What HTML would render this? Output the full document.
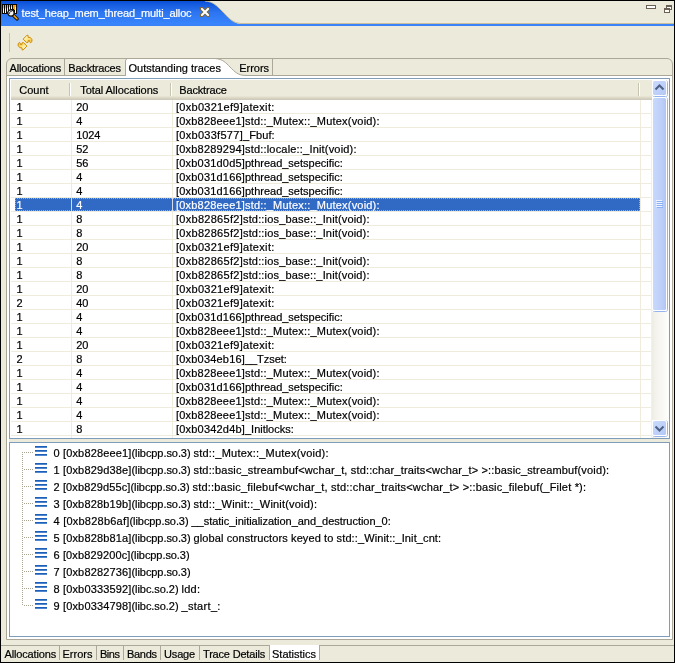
<!DOCTYPE html>
<html lang="en"><head><meta charset="utf-8"><title>test_heap_mem_thread_multi_alloc</title>
<style>
*{margin:0;padding:0;box-sizing:border-box}
html,body{width:675px;height:663px;overflow:hidden}
body{position:relative;background:#ECEADB;-webkit-text-stroke:0.2px;font-family:"Liberation Sans",sans-serif;font-size:11px;color:#000;line-height:14px}
#root{position:absolute;left:0;top:0;width:675px;height:663px;will-change:transform}
.a{position:absolute}
.t{position:absolute;white-space:pre;line-height:14px;height:14px}
.w{color:#fff}
#frame{left:0;top:0;width:675px;height:663px;border:1px solid #000;z-index:50;pointer-events:none}
#titlebar{left:1px;top:1px}
#titleline{left:1px;top:24px;width:673px;height:2px;background:#3A82F7}
#titleline2{left:240px;top:23px;width:434px;height:1px;background:#C9BE9C}
.hdr{top:80px;height:20px;background:linear-gradient(#EBEADB 0,#EBEADB 16px,#E6E3D3 16px,#E6E3D3 17px,#DEDACA 17px,#DEDACA 18px,#D5D1C1 18px,#D5D1C1 19px,#CFCBBC 19px,#CFCBBC 20px)}
.hsepd{top:83px;width:1px;height:13px;background:#C7C5B2}
.hsepw{top:83px;width:1px;height:13px;background:#fff}
.vline{top:100px;width:1px;height:338px;background:#EFECDE}
.hline{left:11px;width:641px;height:1px;background:#EFECDE}
.sel{left:15px;top:198px;width:625px;height:13px;background:#316AC5}
.vsep{width:1px;background:#ACA899}
.dh{left:22px;width:11px;height:1px;background:repeating-linear-gradient(90deg,#A8A490 0,#A8A490 1px,transparent 1px,transparent 2px)}
</style></head>
<body><div id="root">
<svg class="a" id="titlebar" width="260" height="25" viewBox="0 0 260 25">
<defs><linearGradient id="tg" x1="0" y1="0" x2="0" y2="1"><stop offset="0" stop-color="#0A50D8"/><stop offset="0.45" stop-color="#2C74F0"/><stop offset="1" stop-color="#3B88FF"/></linearGradient></defs>
<path d="M0 0 H204 C212 0.5 216 5 221 10 C227 16 231 22 240 23 L240 25 L0 25 Z" fill="url(#tg)"/>
<path d="M204 0 C212 0.5 216 5 221 10 C227 16 231 22 240 22.5" fill="none" stroke="#C9BE9C" stroke-width="1"/>
</svg>
<div class="a" id="titleline2"></div><div class="a" id="titleline"></div>
<svg class="a" style="left:1px;top:1px" width="22" height="22" viewBox="0 0 22 22">
<defs><linearGradient id="ob" x1="0" y1="0" x2="0" y2="1"><stop offset="0" stop-color="#F59A10"/><stop offset="0.3" stop-color="#F8B040"/><stop offset="0.55" stop-color="#fff"/><stop offset="1" stop-color="#fff"/></linearGradient></defs>
<rect x="1" y="3" width="15" height="10" fill="#0c0803"/>
<g fill="url(#ob)"><rect x="2" y="4" width="1" height="8"/><rect x="4" y="4" width="1" height="8"/><rect x="6" y="4" width="1" height="7"/><rect x="8" y="4" width="1" height="5"/><rect x="10" y="4" width="1" height="4"/></g>
<g fill="#F59A10"><rect x="12" y="4" width="1" height="4"/><rect x="13" y="4" width="1" height="5"/></g>
<rect x="14" y="5" width="1" height="7" fill="#fff"/><rect x="14" y="4" width="1" height="2" fill="#F8B040"/>
<line x1="12.5" y1="14.5" x2="16.2" y2="18" stroke="#1a1208" stroke-width="3.2" stroke-linecap="round"/>
<line x1="12.8" y1="14.6" x2="16" y2="17.7" stroke="#F5A520" stroke-width="1.5" stroke-linecap="round"/>
<circle cx="10" cy="12" r="3.1" fill="#F4F4F4" stroke="#1c1c1c" stroke-width="1.2"/>
<path d="M8.6 12.9 A1.9 1.9 0 0 1 10.9 10.4" fill="none" stroke="#444" stroke-width="1"/>
</svg>
<div class="t w" style="left:21.5px;top:6px;letter-spacing:-0.134px">test_heap_mem_thread_multi_alloc</div>
<svg class="a" style="left:200px;top:7px" width="10" height="10" viewBox="0 0 9 9">
<path d="M0.5 0.5 H2.5 L4.5 2.5 L6.5 0.5 H8.5 V2.5 L6.5 4.5 L8.5 6.5 V8.5 H6.5 L4.5 6.5 L2.5 8.5 H0.5 V6.5 L2.5 4.5 L0.5 2.5 Z" fill="#fff" stroke="#7B6A45" stroke-width="1"/>
</svg>
<svg class="a" style="left:645px;top:3px" width="28" height="12" viewBox="0 0 28 12">
<rect x="1.5" y="2.5" width="9" height="3" fill="#fff" stroke="#6B6053" stroke-width="1"/>
<rect x="21.5" y="2.5" width="5" height="4" fill="#fff" stroke="#6B6053" stroke-width="1"/>
<rect x="21" y="2" width="6" height="2" fill="#6B6053"/>
<rect x="19.5" y="5.5" width="5" height="4" fill="#fff" stroke="#6B6053" stroke-width="1"/>
<rect x="19" y="5" width="6" height="2" fill="#6B6053"/>
</svg>
<div class="a" style="left:9px;top:33px;width:1px;height:19px;background:#C5C2B0"></div>
<svg class="a" style="left:14px;top:32px" width="22" height="22" viewBox="0 0 22 22">
<defs><linearGradient id="ag" x1="0" y1="0" x2="1" y2="1"><stop offset="0.15" stop-color="#FFFCE0"/><stop offset="0.55" stop-color="#FFE478"/><stop offset="1" stop-color="#F2B530"/></linearGradient></defs>
<path d="M13 3.2 L14 3.3 L14.1 5.3 L16.3 5.5 L17.9 7.5 L17.9 9.6 L16.6 10.8 L15.6 9.6 L15.6 8.6 L14.3 8.5 L14.1 10.3 L12.6 10.6 L9.2 7.1 Z" fill="url(#ag)" stroke="#C98A0A" stroke-width="1" stroke-linejoin="round"/>
<path d="M13 3.2 L14 3.3 L14.1 5.3 L16.3 5.5 L17.9 7.5 L17.9 9.6 L16.6 10.8 L15.6 9.6 L15.6 8.6 L14.3 8.5 L14.1 10.3 L12.6 10.6 L9.2 7.1 Z" fill="url(#ag)" stroke="#C98A0A" stroke-width="1" stroke-linejoin="round" transform="rotate(180 11.05 10.6)"/>
</svg>
<div class="a" style="left:6px;top:58px;width:667px;height:582px;border:1px solid #ACA899;border-radius:6px 6px 0 0;background:#ECEADB"></div>
<div class="a" style="left:7px;top:76px;width:665px;height:563px;background:#fff"></div>
<div class="a" style="left:7px;top:75px;width:665px;height:1px;background:#ACA899"></div>
<svg class="a" style="left:125px;top:59px" width="124" height="17" viewBox="0 0 124 17">
<path d="M0.5 17 L0.5 2 Q0.5 0 2.5 0 H90 C98 0 101 4 105 8 C110 13 113 16.5 120 16.5 L120 17 Z" fill="#fff"/>
<path d="M0.5 17 L0.5 2 Q0.5 0 2.5 -0.5" stroke="#ACA899" stroke-width="1" fill="none"/>
<path d="M90 -0.5 C98 0 101 4 105 8 C110 13 113 16.5 121 16.5" stroke="#ACA899" stroke-width="1" fill="none"/>
</svg>
<div class="a vsep" style="left:64px;top:59px;height:16px"></div>
<div class="a vsep" style="left:272px;top:59px;height:16px"></div>
<div class="t" style="left:9.5px;top:61px;letter-spacing:-0.155px">Allocations</div>
<div class="t" style="left:68.3px;top:61px;letter-spacing:-0.192px">Backtraces</div>
<div class="t" style="left:128.5px;top:61px;letter-spacing:0.009px">Outstanding traces</div>
<div class="t" style="left:239.3px;top:61px;letter-spacing:-0.042px">Errors</div>
<div class="a" style="left:9px;top:78px;width:661px;height:361px;border:1px solid #7F9DB9;background:#fff"></div>
<div class="a hdr" style="left:11px;width:641px"></div>
<div class="a hsepd" style="left:69px"></div><div class="a hsepw" style="left:70px"></div>
<div class="a hsepd" style="left:170px"></div><div class="a hsepw" style="left:171px"></div>
<div class="a hsepd" style="left:638px"></div><div class="a hsepw" style="left:639px"></div>
<div class="t" style="left:19.3px;top:83px;letter-spacing:-0.012px">Count</div>
<div class="t" style="left:80.2px;top:83px;letter-spacing:-0.052px">Total Allocations</div>
<div class="t" style="left:179.3px;top:83px;letter-spacing:-0.158px">Backtrace</div>
<div class="a hline" style="top:113px"></div>
<div class="a hline" style="top:127px"></div>
<div class="a hline" style="top:141px"></div>
<div class="a hline" style="top:155px"></div>
<div class="a hline" style="top:169px"></div>
<div class="a hline" style="top:183px"></div>
<div class="a hline" style="top:197px"></div>
<div class="a hline" style="top:211px"></div>
<div class="a hline" style="top:225px"></div>
<div class="a hline" style="top:239px"></div>
<div class="a hline" style="top:253px"></div>
<div class="a hline" style="top:267px"></div>
<div class="a hline" style="top:281px"></div>
<div class="a hline" style="top:295px"></div>
<div class="a hline" style="top:309px"></div>
<div class="a hline" style="top:323px"></div>
<div class="a hline" style="top:337px"></div>
<div class="a hline" style="top:351px"></div>
<div class="a hline" style="top:365px"></div>
<div class="a hline" style="top:379px"></div>
<div class="a hline" style="top:393px"></div>
<div class="a hline" style="top:407px"></div>
<div class="a hline" style="top:421px"></div>
<div class="a hline" style="top:435px"></div>
<div class="a vline" style="left:71px"></div>
<div class="a vline" style="left:172px"></div>
<div class="a vline" style="left:640px"></div>
<div class="a" style="left:651px;top:100px;width:1px;height:338px;background:#F3F1E6"></div>
<div class="a sel"></div>
<div class="a" style="left:15px;top:198px;width:625px;height:1px;background:repeating-linear-gradient(90deg,#F0A030 0,#F0A030 1px,transparent 1px,transparent 2px)"></div>
<div class="a" style="left:15px;top:210px;width:625px;height:1px;background:repeating-linear-gradient(90deg,#F0A030 0,#F0A030 1px,transparent 1px,transparent 2px)"></div>
<div class="a" style="left:15px;top:198px;width:1px;height:13px;background:repeating-linear-gradient(180deg,#F0A030 0,#F0A030 1px,transparent 1px,transparent 2px)"></div>
<div class="a" style="left:639px;top:198px;width:1px;height:13px;background:repeating-linear-gradient(180deg,#F0A030 0,#F0A030 1px,transparent 1px,transparent 2px)"></div>
<div class="a" style="left:71px;top:198px;width:1px;height:13px;background:#D8DCE8"></div>
<div class="a" style="left:172px;top:198px;width:1px;height:13px;background:#D8DCE8"></div>
<div class="t" style="left:16.5px;top:100px">1</div><div class="t" style="left:76.3px;top:100px;letter-spacing:-0.125px">20</div><div class="t" style="left:176px;top:100px"><span style="letter-spacing:0.281px">[0xb0321ef9]</span><span style="letter-spacing:0.334px">atexit:</span></div>
<div class="t" style="left:16.5px;top:114px">1</div><div class="t" style="left:76.3px;top:114px;letter-spacing:-0.125px">4</div><div class="t" style="left:176px;top:114px"><span style="letter-spacing:0.194px">[0xb828eee1]</span><span style="letter-spacing:0.196px">std::_Mutex::_Mutex(void):</span></div>
<div class="t" style="left:16.5px;top:128px">1</div><div class="t" style="left:76.3px;top:128px;letter-spacing:-0.121px">1024</div><div class="t" style="left:176px;top:128px"><span style="letter-spacing:0.281px">[0xb033f577]</span><span style="letter-spacing:0.085px">_Fbuf:</span></div>
<div class="t" style="left:16.5px;top:142px">1</div><div class="t" style="left:76.3px;top:142px;letter-spacing:-0.125px">52</div><div class="t" style="left:176px;top:142px"><span style="letter-spacing:0.194px">[0xb8289294]</span><span style="letter-spacing:0.188px">std::locale::_Init(void):</span></div>
<div class="t" style="left:16.5px;top:156px">1</div><div class="t" style="left:76.3px;top:156px;letter-spacing:-0.125px">56</div><div class="t" style="left:176px;top:156px"><span style="letter-spacing:0.194px">[0xb031d0d5]</span><span style="letter-spacing:-0.007px">pthread_setspecific:</span></div>
<div class="t" style="left:16.5px;top:170px">1</div><div class="t" style="left:76.3px;top:170px;letter-spacing:-0.125px">4</div><div class="t" style="left:176px;top:170px"><span style="letter-spacing:0.194px">[0xb031d166]</span><span style="letter-spacing:-0.007px">pthread_setspecific:</span></div>
<div class="t" style="left:16.5px;top:184px">1</div><div class="t" style="left:76.3px;top:184px;letter-spacing:-0.125px">4</div><div class="t" style="left:176px;top:184px"><span style="letter-spacing:0.194px">[0xb031d166]</span><span style="letter-spacing:-0.007px">pthread_setspecific:</span></div>
<div class="t w" style="left:16.5px;top:198px">1</div><div class="t w" style="left:76.3px;top:198px;letter-spacing:-0.125px">4</div><div class="t w" style="left:176px;top:198px"><span style="letter-spacing:0.194px">[0xb828eee1]</span><span style="letter-spacing:0.196px">std::_Mutex::_Mutex(void):</span></div>
<div class="t" style="left:16.5px;top:212px">1</div><div class="t" style="left:76.3px;top:212px;letter-spacing:-0.125px">8</div><div class="t" style="left:176px;top:212px"><span style="letter-spacing:0.281px">[0xb82865f2]</span><span style="letter-spacing:0.163px">std::ios_base::_Init(void):</span></div>
<div class="t" style="left:16.5px;top:226px">1</div><div class="t" style="left:76.3px;top:226px;letter-spacing:-0.125px">8</div><div class="t" style="left:176px;top:226px"><span style="letter-spacing:0.281px">[0xb82865f2]</span><span style="letter-spacing:0.163px">std::ios_base::_Init(void):</span></div>
<div class="t" style="left:16.5px;top:240px">1</div><div class="t" style="left:76.3px;top:240px;letter-spacing:-0.125px">20</div><div class="t" style="left:176px;top:240px"><span style="letter-spacing:0.281px">[0xb0321ef9]</span><span style="letter-spacing:0.334px">atexit:</span></div>
<div class="t" style="left:16.5px;top:254px">1</div><div class="t" style="left:76.3px;top:254px;letter-spacing:-0.125px">8</div><div class="t" style="left:176px;top:254px"><span style="letter-spacing:0.281px">[0xb82865f2]</span><span style="letter-spacing:0.163px">std::ios_base::_Init(void):</span></div>
<div class="t" style="left:16.5px;top:268px">1</div><div class="t" style="left:76.3px;top:268px;letter-spacing:-0.125px">8</div><div class="t" style="left:176px;top:268px"><span style="letter-spacing:0.281px">[0xb82865f2]</span><span style="letter-spacing:0.163px">std::ios_base::_Init(void):</span></div>
<div class="t" style="left:16.5px;top:282px">1</div><div class="t" style="left:76.3px;top:282px;letter-spacing:-0.125px">20</div><div class="t" style="left:176px;top:282px"><span style="letter-spacing:0.281px">[0xb0321ef9]</span><span style="letter-spacing:0.334px">atexit:</span></div>
<div class="t" style="left:16.5px;top:296px">2</div><div class="t" style="left:76.3px;top:296px;letter-spacing:-0.125px">40</div><div class="t" style="left:176px;top:296px"><span style="letter-spacing:0.281px">[0xb0321ef9]</span><span style="letter-spacing:0.334px">atexit:</span></div>
<div class="t" style="left:16.5px;top:310px">1</div><div class="t" style="left:76.3px;top:310px;letter-spacing:-0.125px">4</div><div class="t" style="left:176px;top:310px"><span style="letter-spacing:0.194px">[0xb031d166]</span><span style="letter-spacing:-0.007px">pthread_setspecific:</span></div>
<div class="t" style="left:16.5px;top:324px">1</div><div class="t" style="left:76.3px;top:324px;letter-spacing:-0.125px">4</div><div class="t" style="left:176px;top:324px"><span style="letter-spacing:0.194px">[0xb828eee1]</span><span style="letter-spacing:0.196px">std::_Mutex::_Mutex(void):</span></div>
<div class="t" style="left:16.5px;top:338px">1</div><div class="t" style="left:76.3px;top:338px;letter-spacing:-0.125px">20</div><div class="t" style="left:176px;top:338px"><span style="letter-spacing:0.281px">[0xb0321ef9]</span><span style="letter-spacing:0.334px">atexit:</span></div>
<div class="t" style="left:16.5px;top:352px">2</div><div class="t" style="left:76.3px;top:352px;letter-spacing:-0.125px">8</div><div class="t" style="left:176px;top:352px"><span style="letter-spacing:0.194px">[0xb034eb16]</span><span style="letter-spacing:-0.061px">__Tzset:</span></div>
<div class="t" style="left:16.5px;top:366px">1</div><div class="t" style="left:76.3px;top:366px;letter-spacing:-0.125px">4</div><div class="t" style="left:176px;top:366px"><span style="letter-spacing:0.194px">[0xb828eee1]</span><span style="letter-spacing:0.196px">std::_Mutex::_Mutex(void):</span></div>
<div class="t" style="left:16.5px;top:380px">1</div><div class="t" style="left:76.3px;top:380px;letter-spacing:-0.125px">4</div><div class="t" style="left:176px;top:380px"><span style="letter-spacing:0.194px">[0xb031d166]</span><span style="letter-spacing:-0.007px">pthread_setspecific:</span></div>
<div class="t" style="left:16.5px;top:394px">1</div><div class="t" style="left:76.3px;top:394px;letter-spacing:-0.125px">4</div><div class="t" style="left:176px;top:394px"><span style="letter-spacing:0.194px">[0xb828eee1]</span><span style="letter-spacing:0.196px">std::_Mutex::_Mutex(void):</span></div>
<div class="t" style="left:16.5px;top:408px">1</div><div class="t" style="left:76.3px;top:408px;letter-spacing:-0.125px">4</div><div class="t" style="left:176px;top:408px"><span style="letter-spacing:0.194px">[0xb828eee1]</span><span style="letter-spacing:0.196px">std::_Mutex::_Mutex(void):</span></div>
<div class="t" style="left:16.5px;top:422px">1</div><div class="t" style="left:76.3px;top:422px;letter-spacing:-0.125px">8</div><div class="t" style="left:176px;top:422px"><span style="letter-spacing:0.194px">[0xb0342d4b]</span><span style="letter-spacing:-0.02px">_Initlocks:</span></div>
<div class="a" style="left:652px;top:80px;width:17px;height:358px;background:linear-gradient(90deg,#EEEDE5 0,#F6F5EF 6px,#FEFEFB 100%)"></div>
<svg class="a" style="left:652px;top:80px" width="17" height="17" viewBox="0 0 17 17">
<rect x="0" y="0" width="17" height="17" fill="#fff"/>
<rect x="0.5" y="0.5" width="15" height="16" rx="2" fill="#fff" stroke="#98B4EC" stroke-width="1"/>
<rect x="0" y="0" width="15" height="16" rx="1.5" fill="#fff"/>
<defs><linearGradient id="sb80" x1="0" y1="0" x2="1" y2="1"><stop offset="0" stop-color="#CBDAFD"/><stop offset="1" stop-color="#B4C8F6"/></linearGradient></defs>
<rect x="1" y="1" width="13" height="14" rx="1.5" fill="url(#sb80)"/>
<path d="M3.5 9.5 L7.5 5.5 L11.5 9.5" fill="none" stroke="#4D6185" stroke-width="2" stroke-linejoin="miter"/>
</svg>
<svg class="a" style="left:652px;top:420px" width="17" height="17" viewBox="0 0 17 17">
<rect x="0" y="0" width="17" height="17" fill="#fff"/>
<rect x="0.5" y="0.5" width="15" height="16" rx="2" fill="#fff" stroke="#98B4EC" stroke-width="1"/>
<rect x="0" y="0" width="15" height="16" rx="1.5" fill="#fff"/>
<defs><linearGradient id="sb420" x1="0" y1="0" x2="1" y2="1"><stop offset="0" stop-color="#CBDAFD"/><stop offset="1" stop-color="#B4C8F6"/></linearGradient></defs>
<rect x="1" y="1" width="13" height="14" rx="1.5" fill="url(#sb420)"/>
<path d="M3.5 6.5 L7.5 10.5 L11.5 6.5" fill="none" stroke="#4D6185" stroke-width="2" stroke-linejoin="miter"/>
</svg>
<svg class="a" style="left:652px;top:97px" width="17" height="215" viewBox="0 0 17 215">
<rect x="0" y="0" width="17" height="215" fill="#fff"/>
<rect x="0.5" y="0.5" width="15" height="214" rx="2" fill="#fff" stroke="#98B4EC" stroke-width="1"/>
<rect x="0" y="0" width="15" height="214" rx="1.5" fill="#fff"/>
<defs><linearGradient id="th" x1="0" y1="0" x2="1" y2="0"><stop offset="0" stop-color="#C9D8FC"/><stop offset="0.7" stop-color="#BCCEF8"/><stop offset="1" stop-color="#B0C4F4"/></linearGradient></defs>
<rect x="1" y="1" width="13" height="212" rx="1.5" fill="url(#th)"/>
<g fill="#EEF4FE"><rect x="4" y="103" width="6" height="1"/><rect x="4" y="105" width="6" height="1"/><rect x="4" y="107" width="6" height="1"/><rect x="4" y="109" width="6" height="1"/></g>
<g fill="#8CB0F8"><rect x="5" y="104" width="6" height="1"/><rect x="5" y="106" width="6" height="1"/><rect x="5" y="108" width="6" height="1"/><rect x="5" y="110" width="6" height="1"/></g>
</svg>
<div class="a" style="left:9px;top:439px;width:661px;height:3px;background:#ECEADB"></div>
<div class="a" style="left:9px;top:442px;width:661px;height:195px;border:1px solid #7F9DB9;background:#fff"></div>
<div class="a" style="left:22px;top:452px;width:1px;height:154px;background:repeating-linear-gradient(180deg,#A8A490 0,#A8A490 1px,transparent 1px,transparent 2px)"></div>
<div class="a dh" style="top:452px"></div>
<svg class="a" style="left:35px;top:446px" width="12" height="10" viewBox="0 0 12 10"><g fill="#1C5FB8"><rect x="0" y="0" width="12" height="1"/><rect x="0" y="4" width="12" height="1"/><rect x="0" y="8" width="12" height="1"/></g><g fill="#4F86CE"><rect x="0" y="1" width="12" height="1"/><rect x="0" y="5" width="12" height="1"/><rect x="0" y="9" width="12" height="1"/></g></svg>
<div class="t" style="left:53.5px;top:446px"><span style="letter-spacing:0.153px">0 [0xb828eee1]</span><span style="letter-spacing:-0.07px">(libcpp.so.3) </span><span style="letter-spacing:0.215px">std::_Mutex::_Mutex(void):</span></div>
<div class="a dh" style="top:469px;left:24px;width:9px"></div>
<svg class="a" style="left:35px;top:463px" width="12" height="10" viewBox="0 0 12 10"><g fill="#1C5FB8"><rect x="0" y="0" width="12" height="1"/><rect x="0" y="4" width="12" height="1"/><rect x="0" y="8" width="12" height="1"/></g><g fill="#4F86CE"><rect x="0" y="1" width="12" height="1"/><rect x="0" y="5" width="12" height="1"/><rect x="0" y="9" width="12" height="1"/></g></svg>
<div class="t" style="left:53.5px;top:463px"><span style="letter-spacing:0.153px">1 [0xb829d38e]</span><span style="letter-spacing:-0.07px">(libcpp.so.3) </span><span style="letter-spacing:0.158px">std::basic_streambuf&lt;wchar_t, std::char_traits&lt;wchar_t&gt; &gt;::basic_streambuf(void):</span></div>
<div class="a dh" style="top:486px"></div>
<svg class="a" style="left:35px;top:480px" width="12" height="10" viewBox="0 0 12 10"><g fill="#1C5FB8"><rect x="0" y="0" width="12" height="1"/><rect x="0" y="4" width="12" height="1"/><rect x="0" y="8" width="12" height="1"/></g><g fill="#4F86CE"><rect x="0" y="1" width="12" height="1"/><rect x="0" y="5" width="12" height="1"/><rect x="0" y="9" width="12" height="1"/></g></svg>
<div class="t" style="left:53.5px;top:480px"><span style="letter-spacing:0.126px">2 [0xb829d55c]</span><span style="letter-spacing:-0.07px">(libcpp.so.3) </span><span style="letter-spacing:0.196px">std::basic_filebuf&lt;wchar_t, std::char_traits&lt;wchar_t&gt; &gt;::basic_filebuf(_Filet *):</span></div>
<div class="a dh" style="top:503px;left:24px;width:9px"></div>
<svg class="a" style="left:35px;top:497px" width="12" height="10" viewBox="0 0 12 10"><g fill="#1C5FB8"><rect x="0" y="0" width="12" height="1"/><rect x="0" y="4" width="12" height="1"/><rect x="0" y="8" width="12" height="1"/></g><g fill="#4F86CE"><rect x="0" y="1" width="12" height="1"/><rect x="0" y="5" width="12" height="1"/><rect x="0" y="9" width="12" height="1"/></g></svg>
<div class="t" style="left:53.5px;top:497px"><span style="letter-spacing:0.153px">3 [0xb828b19b]</span><span style="letter-spacing:-0.07px">(libcpp.so.3) </span><span style="letter-spacing:0.196px">std::_Winit::_Winit(void):</span></div>
<div class="a dh" style="top:520px"></div>
<svg class="a" style="left:35px;top:514px" width="12" height="10" viewBox="0 0 12 10"><g fill="#1C5FB8"><rect x="0" y="0" width="12" height="1"/><rect x="0" y="4" width="12" height="1"/><rect x="0" y="8" width="12" height="1"/></g><g fill="#4F86CE"><rect x="0" y="1" width="12" height="1"/><rect x="0" y="5" width="12" height="1"/><rect x="0" y="9" width="12" height="1"/></g></svg>
<div class="t" style="left:53.5px;top:514px"><span style="letter-spacing:0.229px">4 [0xb828b6af]</span><span style="letter-spacing:-0.07px">(libcpp.so.3) </span><span style="letter-spacing:-0.033px">__static_initialization_and_destruction_0:</span></div>
<div class="a dh" style="top:537px;left:24px;width:9px"></div>
<svg class="a" style="left:35px;top:531px" width="12" height="10" viewBox="0 0 12 10"><g fill="#1C5FB8"><rect x="0" y="0" width="12" height="1"/><rect x="0" y="4" width="12" height="1"/><rect x="0" y="8" width="12" height="1"/></g><g fill="#4F86CE"><rect x="0" y="1" width="12" height="1"/><rect x="0" y="5" width="12" height="1"/><rect x="0" y="9" width="12" height="1"/></g></svg>
<div class="t" style="left:53.5px;top:531px"><span style="letter-spacing:0.153px">5 [0xb828b81a]</span><span style="letter-spacing:-0.07px">(libcpp.so.3) </span><span style="letter-spacing:0.107px">global constructors keyed to std::_Winit::_Init_cnt:</span></div>
<div class="a dh" style="top:554px"></div>
<svg class="a" style="left:35px;top:548px" width="12" height="10" viewBox="0 0 12 10"><g fill="#1C5FB8"><rect x="0" y="0" width="12" height="1"/><rect x="0" y="4" width="12" height="1"/><rect x="0" y="8" width="12" height="1"/></g><g fill="#4F86CE"><rect x="0" y="1" width="12" height="1"/><rect x="0" y="5" width="12" height="1"/><rect x="0" y="9" width="12" height="1"/></g></svg>
<div class="t" style="left:53.5px;top:548px"><span style="letter-spacing:0.126px">6 [0xb829200c]</span><span style="letter-spacing:-0.071px">(libcpp.so.3)</span></div>
<div class="a dh" style="top:571px;left:24px;width:9px"></div>
<svg class="a" style="left:35px;top:565px" width="12" height="10" viewBox="0 0 12 10"><g fill="#1C5FB8"><rect x="0" y="0" width="12" height="1"/><rect x="0" y="4" width="12" height="1"/><rect x="0" y="8" width="12" height="1"/></g><g fill="#4F86CE"><rect x="0" y="1" width="12" height="1"/><rect x="0" y="5" width="12" height="1"/><rect x="0" y="9" width="12" height="1"/></g></svg>
<div class="t" style="left:53.5px;top:565px"><span style="letter-spacing:0.153px">7 [0xb8282736]</span><span style="letter-spacing:-0.071px">(libcpp.so.3)</span></div>
<div class="a dh" style="top:588px"></div>
<svg class="a" style="left:35px;top:582px" width="12" height="10" viewBox="0 0 12 10"><g fill="#1C5FB8"><rect x="0" y="0" width="12" height="1"/><rect x="0" y="4" width="12" height="1"/><rect x="0" y="8" width="12" height="1"/></g><g fill="#4F86CE"><rect x="0" y="1" width="12" height="1"/><rect x="0" y="5" width="12" height="1"/><rect x="0" y="9" width="12" height="1"/></g></svg>
<div class="t" style="left:53.5px;top:582px"><span style="letter-spacing:0.153px">8 [0xb0333592]</span><span style="letter-spacing:-0.062px">(libc.so.2) </span><span style="letter-spacing:0.237px">ldd:</span></div>
<div class="a dh" style="top:605px;left:24px;width:9px"></div>
<svg class="a" style="left:35px;top:599px" width="12" height="10" viewBox="0 0 12 10"><g fill="#1C5FB8"><rect x="0" y="0" width="12" height="1"/><rect x="0" y="4" width="12" height="1"/><rect x="0" y="8" width="12" height="1"/></g><g fill="#4F86CE"><rect x="0" y="1" width="12" height="1"/><rect x="0" y="5" width="12" height="1"/><rect x="0" y="9" width="12" height="1"/></g></svg>
<div class="t" style="left:53.5px;top:599px"><span style="letter-spacing:0.153px">9 [0xb0334798]</span><span style="letter-spacing:-0.062px">(libc.so.2) </span><span style="letter-spacing:0.314px">_start_:</span></div>
<div class="a" style="left:1px;top:645px;width:673px;height:1px;background:#ACA899"></div>
<div class="a" style="left:270px;top:645px;width:49px;height:15px;background:#fff"></div>
<div class="a vsep" style="left:59px;top:646px;height:14px"></div>
<div class="a vsep" style="left:96px;top:646px;height:14px"></div>
<div class="a vsep" style="left:123px;top:646px;height:14px"></div>
<div class="a vsep" style="left:160px;top:646px;height:14px"></div>
<div class="a vsep" style="left:199px;top:646px;height:14px"></div>
<div class="a vsep" style="left:269px;top:646px;height:14px"></div>
<div class="a vsep" style="left:319px;top:646px;height:14px"></div>
<div class="t" style="left:4.5px;top:647px;letter-spacing:-0.155px">Allocations</div>
<div class="t" style="left:62.5px;top:647px;letter-spacing:0.008px">Errors</div>
<div class="t" style="left:100px;top:647px;letter-spacing:-0.477px">Bins</div>
<div class="t" style="left:127px;top:647px;letter-spacing:-0.301px">Bands</div>
<div class="t" style="left:164px;top:647px;letter-spacing:-0.159px">Usage</div>
<div class="t" style="left:203px;top:647px;letter-spacing:-0.184px">Trace Details</div>
<div class="t" style="left:272px;top:647px;letter-spacing:-0.002px">Statistics</div>
<div class="a" id="frame"></div>
</div></body></html>
